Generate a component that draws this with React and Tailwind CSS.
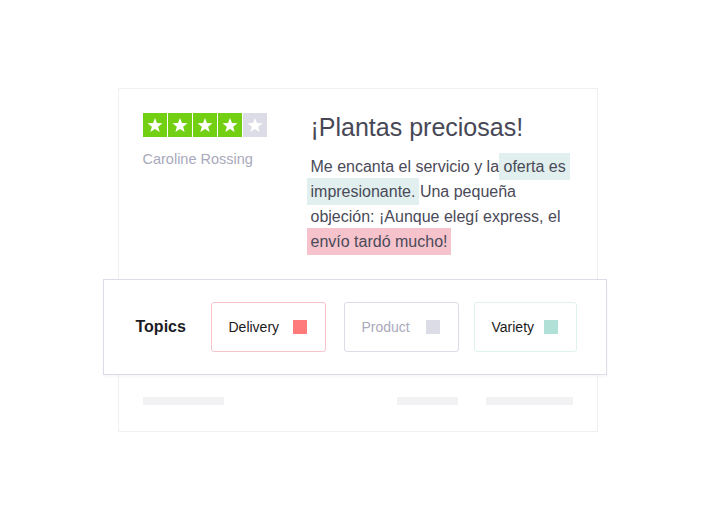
import React from 'react';

const Star = ({ filled }) => (
  <div className={`w-6 h-6 flex items-center justify-center ${filled ? 'bg-[#73cf11]' : 'bg-[#dcdce6]'}`}>
    <svg width="18" height="18" viewBox="0 0 24 24">
      <path d="M12 2.5l2.6 6.9 7.4.3-5.8 4.6 2 7.1L12 17.3l-6.2 4.1 2-7.1L2 9.7l7.4-.3z" fill="#ffffff" />
    </svg>
  </div>
);

const Chip = ({ label, border, square, text, width }) => (
  <div className={`h-[50px] ${width} flex items-center justify-between pl-[17px] pr-[18px] rounded-[3px] border ${border}`}>
    <span className={`text-[14px] ${text}`}>{label}</span>
    <span className={`w-[14px] h-[14px] ${square}`} />
  </div>
);

export default function App() {
  return (
    <div className="w-[715px] h-[520px] bg-white flex items-center justify-center font-['Liberation_Sans',Arial,sans-serif]">
      <div className="w-[480px] h-[344px] border border-[#efeff1] bg-white flex flex-col">
        {/* review */}
        <div className="flex pl-[24px] pt-[24px] h-[190px]">
          <div className="w-[168px] flex flex-col">
            <div className="flex gap-px">
              <Star filled />
              <Star filled />
              <Star filled />
              <Star filled />
              <Star />
            </div>
            <div className="mt-[12px] text-[14.5px] text-[#a9a9bc]">Caroline Rossing</div>
          </div>
          <div className="w-[265px]">
            <h1 className="text-[25px] leading-[28px] text-[#474756]">¡Plantas preciosas!</h1>
            <p className="mt-[13px] text-[16px] leading-[25px] text-[#4a4a58]">
              Me encanta el servicio y la{' '}
              <span className="bg-[#e1efee] px-[4px] py-[5px] -mx-[4px] box-decoration-clone">oferta es impresionante.</span>{' '}
              Una pequeña objeción: ¡Aunque elegí express, el{' '}
              <span className="bg-[#f6c3cc] px-[4px] py-[5px] -mx-[4px] box-decoration-clone">envío tardó mucho!</span>
            </p>
          </div>
        </div>

        {/* topics strip */}
        <div className="-ml-[16px] -mr-[10px] h-[96px] border border-[#dcdbe8] bg-white flex items-center pl-[32px] shadow-[0_2px_3px_rgba(0,0,0,0.03)]">
          <span className="text-[16px] font-bold text-[#1c1c24] w-[75px]">Topics</span>
          <div className="flex gap-[18px]">
            <Chip label="Delivery" border="border-[#f7c3cb]" square="bg-[#ff7a7a]" text="text-[#1a1a1a]" width="w-[115px]" />
            <Chip label="Product" border="border-[#dcdbe8]" square="bg-[#dcdce6]" text="text-[#a9a9bc]" width="w-[115px]" />
            <div className="-ml-[3px]">
              <Chip label="Variety" border="border-[#dff2ee]" square="bg-[#b1e0d7]" text="text-[#1a1a1a]" width="w-[103px]" />
            </div>
          </div>
        </div>

        {/* skeleton */}
        <div className="flex justify-between px-[24px] pt-[22px]">
          <div className="w-[81px] h-[8px] bg-[#f2f2f4]" />
          <div className="flex gap-[28px]">
            <div className="w-[61px] h-[8px] bg-[#f2f2f4]" />
            <div className="w-[87px] h-[8px] bg-[#f2f2f4]" />
          </div>
        </div>
      </div>
    </div>
  );
}
